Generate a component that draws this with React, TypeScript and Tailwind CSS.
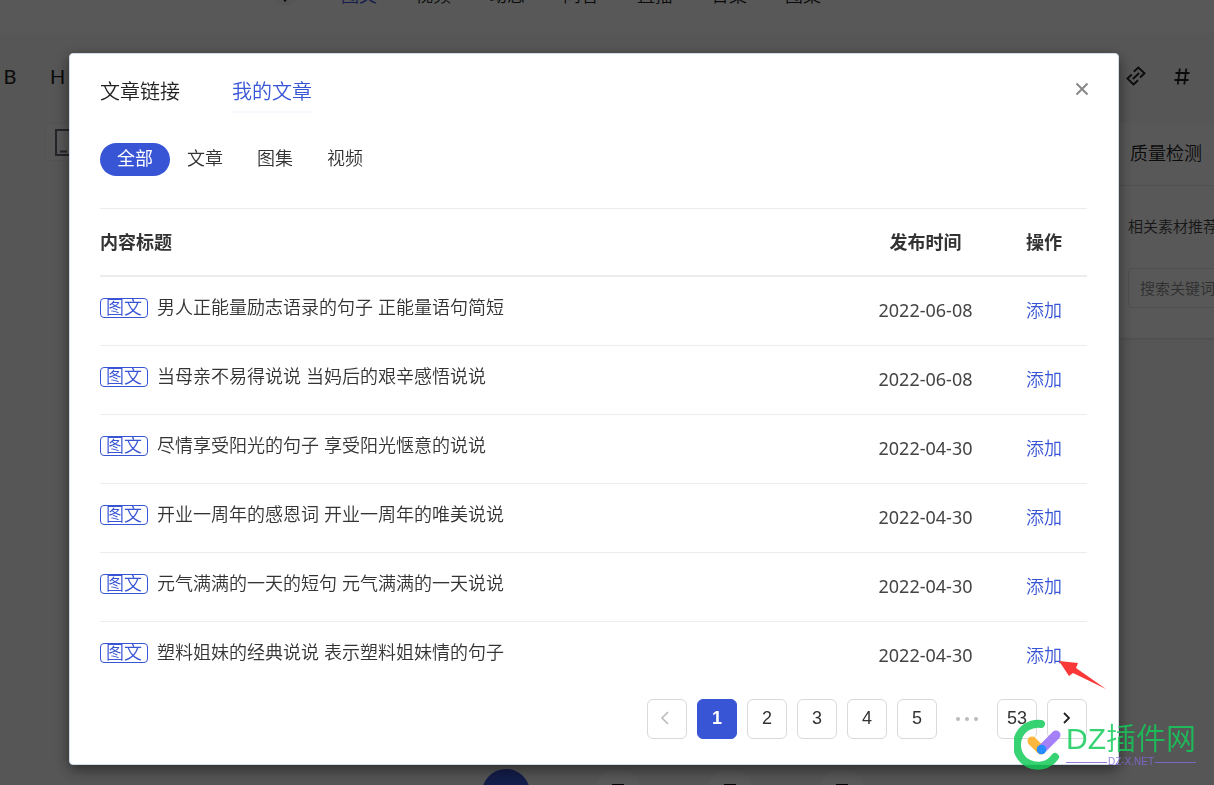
import { useState } from 'react'

const navItems = ['图文', '视频', '动态', '问答', '直播', '合集', '图集']
const filters = ['全部', '文章', '图集', '视频']

const articles = [
  { title: '男人正能量励志语录的句子 正能量语句简短', date: '2022-06-08' },
  { title: '当母亲不易得说说 当妈后的艰辛感悟说说', date: '2022-06-08' },
  { title: '尽情享受阳光的句子 享受阳光惬意的说说', date: '2022-04-30' },
  { title: '开业一周年的感恩词 开业一周年的唯美说说', date: '2022-04-30' },
  { title: '元气满满的一天的短句 元气满满的一天说说', date: '2022-04-30' },
  { title: '塑料姐妹的经典说说 表示塑料姐妹情的句子', date: '2022-04-30' },
]

function LinkIcon() {
  return (
    <svg width="20" height="20" viewBox="0 0 20 20" fill="none" stroke="currentColor" strokeWidth="1.900">
      <path d="M7.800 5.800 12.300 1.500 18.500 7.200 14 11.500M5.800 8.500 1.500 12.600 7.500 18.500 12 14.200M6.800 13 13.200 7" />
    </svg>
  )
}

function HashIcon() {
  return (
    <svg width="16" height="17" viewBox="0 0 16 17" fill="none" stroke="currentColor" strokeWidth="1.800">
      <path d="M5.800 .5 3.800 16.500M12.300 .5 10.300 16.500M1.500 5H15.500M.5 12H14.500" />
    </svg>
  )
}

function TabletIcon() {
  return (
    <svg width="22" height="27" viewBox="0 0 22 27" fill="none" stroke="currentColor" strokeWidth="2">
      <path d="M1 1H21V26H1ZM5 22.500H12" />
    </svg>
  )
}

// Editörün arka planı
function EditorPage() {
  return (
    <div className="flex h-screen flex-col overflow-hidden bg-[#f7f7f7] text-[#222]">
      <header className="flex h-[33px] shrink-0 items-start bg-[#fdfdfd] pl-[273px]">
        <button aria-label="返回" className="-mt-[18px] flex h-6 w-6 items-end justify-center rounded-full bg-[#f2f2f2] pb-1">
          <svg width="6" height="4" viewBox="0 0 6 4" aria-hidden="true">
            <path d="M1 0 3 3 5 0" fill="none" stroke="currentColor" strokeWidth="1.500" />
          </svg>
        </button>
        <nav className="-mt-4 ml-[44px] flex gap-[38px] text-lg leading-6">
          {navItems.map((item, i) => (
            <a key={item} href="#" className={i === 0 ? 'text-[#3855d5]' : ''}>
              {item}
            </a>
          ))}
        </nav>
      </header>

      <div className="flex h-[90px] shrink-0 items-center justify-between bg-[#f4f5f4] pr-6 pb-1 pl-[3px]">
        <div className="flex gap-[33px] font-['Lato'] text-xl font-normal">
          <button className="w-[14px]">B</button>
          <button className="w-[14px]">H</button>
        </div>
        <div className="flex items-center gap-[28px]">
          <button aria-label="链接"><LinkIcon /></button>
          <button aria-label="话题"><HashIcon /></button>
        </div>
      </div>

      <div className="flex flex-1 items-start justify-between overflow-hidden">
        <button aria-label="预览" className="ml-[45px] flex h-[38px] w-[60px] items-center border border-[#eee] bg-[#fafafa] pl-[9px] text-[#667]">
          <TabletIcon />
        </button>
        <aside className="h-[215px] w-[110px] overflow-hidden bg-[#fdfdfd] shadow">
          <h2 className="h-[63px] border-b border-[#e8e8e8] pl-[26px] text-lg leading-[62px] whitespace-nowrap">质量检测</h2>
          <div className="pt-[30px] pl-6">
            <label htmlFor="material" className="block text-[15px] leading-[22px] whitespace-nowrap text-[#444]">
              相关素材推荐
            </label>
            <input
              id="material"
              placeholder="搜索关键词"
              className="mt-[30px] h-10 w-[240px] rounded border border-[#e2e2e2] px-[11px] text-[15px] placeholder:text-[#888]"
            />
          </div>
        </aside>
      </div>

      <footer className="flex h-4 shrink-0 items-start gap-16 overflow-hidden pl-[482px]">
        <button aria-label="发布" className="h-12 w-12 shrink-0 rounded-full bg-[#3855d5]" />
        {['保存', '预览', '定时'].map((label) => (
          <button key={label} aria-label={label} className="flex h-12 w-12 shrink-0 justify-center rounded-full bg-[#fefefe] pt-[15px]">
            <span className="h-4 w-3 bg-black" />
          </button>
        ))}
      </footer>
    </div>
  )
}

function PointerArrow() {
  return (
    <svg className="pointer-events-none absolute top-4 left-[33px]" width="48" height="30" viewBox="0 0 48 30" aria-hidden="true">
      <path d="M0 1 19 3 17 8 47 29 14 13 10 16Z" fill="#fb3838" />
    </svg>
  )
}

function Watermark() {
  return (
    <div className="pointer-events-none fixed right-[18px] bottom-[14px] flex items-start font-normal opacity-85">
      <svg width="50" height="52" viewBox="0 0 50 52" fill="none" strokeLinecap="round">
        <path d="M27 5A21 21 0 1 0 41 38" stroke="#14cc5a" strokeWidth="8" />
        <path d="M18 22 27 31" stroke="#ffac1c" strokeWidth="9" />
        <path d="M42 16 28 30" stroke="#946af8" strokeWidth="9" />
        <circle cx="27.500" cy="30.500" r="4.800" fill="#0078ff" />
      </svg>
      <div className="ml-[2px]">
        <div className="text-[30px] leading-10 font-[350] text-[#14cc5a]">DZ插件网</div>
        <div className="flex items-center gap-px text-[10px] leading-[6px] text-[#8468d8]">
          <span className="h-px flex-1 bg-current" />
          DZ-X.NET
          <span className="h-px flex-1 bg-current" />
        </div>
      </div>
    </div>
  )
}

const pageButton = 'flex h-10 w-10 items-center justify-center rounded-md border pb-[2px] text-lg leading-5'

function Pagination() {
  const [page, setPage] = useState(1)

  return (
    <nav aria-label="分页" className="mt-2 flex justify-end gap-[10px] text-[#333]">
      <button aria-label="上一页" disabled={page === 1} className={`${pageButton} border-[#d9d9d9] pr-1 text-[#b8b8b8]`}>
        <svg width="10" height="14" viewBox="0 0 10 14" fill="none" stroke="currentColor" strokeWidth="1.500">
          <path d="M8 1 2 7 8 13" />
        </svg>
      </button>
      {[1, 2, 3, 4, 5].map((n) => (
        <button
          key={n}
          onClick={() => setPage(n)}
          className={`${pageButton} ${n === page ? 'border-[#3855d5] bg-[#3855d5] font-bold text-white' : 'border-[#d9d9d9]'}`}
        >
          {n}
        </button>
      ))}
      <span className="flex h-10 w-10 items-center justify-center gap-[5px]">
        <i className="h-1 w-1 rounded-full bg-[#bbb]" />
        <i className="h-1 w-1 rounded-full bg-[#bbb]" />
        <i className="h-1 w-1 rounded-full bg-[#bbb]" />
      </span>
      <button onClick={() => setPage(53)} className={`${pageButton} border-[#d9d9d9]`}>53</button>
      <button aria-label="下一页" className={`${pageButton} border-[#d9d9d9]`}>
        <svg width="8" height="12" viewBox="0 0 8 12" fill="none" stroke="#222" strokeWidth="1.800">
          <path d="M1 1 6 6 1 11" />
        </svg>
      </button>
    </nav>
  )
}

function ArticleModal() {
  const [filter, setFilter] = useState('全部')

  return (
    <div role="dialog" aria-modal="true" className="w-full rounded border border-[#d0dbe8] bg-white pt-6 pr-[31px] pb-[25px] pl-[30px] shadow-[0_5px_15px_rgba(0,0,0,0.5)]">
      <div className="flex items-start">
        <button className="text-xl leading-7 text-[#222]">文章链接</button>
        <button className="ml-[52px] border-b-2 border-[#f8f9ff] pb-[5px] text-xl leading-7 text-[#3855d5]">我的文章</button>
        <button aria-label="关闭" className="mt-1 -mr-[2px] ml-auto text-[#888]">
          <svg width="14" height="14" viewBox="0 0 14 14" stroke="currentColor" strokeWidth="2">
            <path d="M1.500 1.500 12.500 12.500M12.500 1.500 1.500 12.500" />
          </svg>
        </button>
      </div>

      <div className="mt-[30px] flex">
        {filters.map((item) => (
          <button
            key={item}
            onClick={() => setFilter(item)}
            className={`h-[33px] w-[70px] rounded-full pb-px text-lg leading-8 ${item === filter ? 'bg-[#3855d5] font-normal text-white' : 'text-[#333]'}`}
          >
            {item}
          </button>
        ))}
      </div>

      <table className="mt-8 w-full table-fixed border-separate border-spacing-0 text-lg leading-6 text-[#333]">
        <thead>
          <tr className="h-[69px] font-bold">
            <th className="border-t border-b-2 border-[#ececec] pt-[2px] text-left">内容标题</th>
            <th className="w-[151px] border-t border-b-2 border-[#ececec] pt-[2px]">发布时间</th>
            <th className="w-[86px] border-t border-b-2 border-[#ececec] pt-[2px]">操作</th>
          </tr>
        </thead>
        <tbody>
          {articles.map((article, i) => {
            const last = i === articles.length - 1
            const line = last ? 'border-b border-transparent' : 'border-b border-[#ececec]'
            return (
              <tr key={article.title} className="h-[69px]">
                <td className={`pb-[6px] ${line}`}>
                  <div className="flex items-center gap-[9px]">
                    <span className="h-5 rounded border border-[#3855d5] px-[5px] leading-[18px] text-[#3855d5]">图文</span>
                    {article.title}
                  </div>
                </td>
                <td className={`pb-[3px] text-center font-['Noto_Sans'] font-normal text-[#444] ${line}`}>{article.date}</td>
                <td className={`text-center ${line}`}>
                  <span className="relative inline-block">
                    <a href="#" className="text-[#3855d5]">添加</a>
                    {last && <PointerArrow />}
                  </span>
                </td>
              </tr>
            )
          })}
        </tbody>
      </table>

      <Pagination />
    </div>
  )
}

export default function App() {
  return (
    <div className="font-['Liberation_Sans','Noto_Sans_CJK_SC',sans-serif] font-[350]">
      <EditorPage />
      <div className="fixed inset-0 overflow-hidden bg-black/65 pt-[53px] pr-[95px] pl-[69px]">
        <ArticleModal />
      </div>
      <Watermark />
    </div>
  )
}
